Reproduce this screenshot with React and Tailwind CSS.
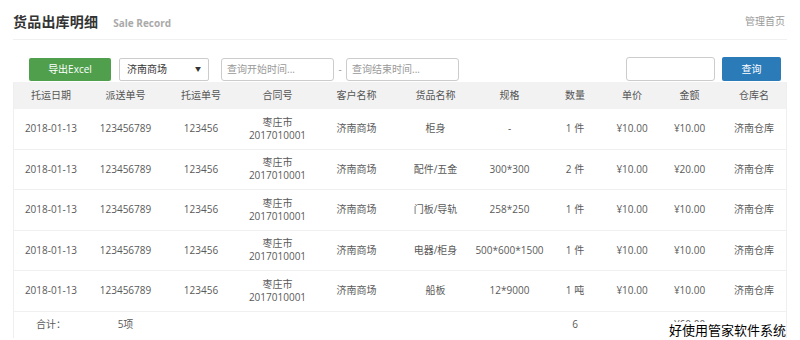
import React from 'react';

const cols = 'grid grid-cols-[74px_75px_76px_77px_81px_77px_71px_60px_54px_61px_68px]';

const headers = ['托运日期', '派送单号', '托运单号', '合同号', '客户名称', '货品名称', '规格', '数量', '单价', '金额', '仓库名'];

const rows = [
  { goods: '柜身', spec: '-', qty: '1 件', amount: '¥10.00' },
  { goods: '配件/五金', spec: '300*300', qty: '2 件', amount: '¥20.00' },
  { goods: '门板/导轨', spec: '258*250', qty: '1 件', amount: '¥10.00' },
  { goods: '电器/柜身', spec: '500*600*1500', qty: '1 件', amount: '¥10.00' },
  { goods: '船板', spec: '12*9000', qty: '1 吨', amount: '¥10.00' },
];

const Cell = ({ children }) => (
  <div className="flex items-center justify-center whitespace-nowrap">{children}</div>
);

const App = () => {
  return (
    <div className="w-[800px] h-[340px] overflow-hidden bg-white relative font-['Open_Sans','Noto_Sans_CJK_SC',sans-serif] text-[10px] text-[#5a5a5a]">
      {/* Title bar */}
      <div className="mx-[13px] h-[40px] flex items-center justify-between border-b border-[#f0f0f0] pt-[4px]">
        <div className="flex items-baseline">
          <h1 className="text-[14px] font-bold text-[#333] tracking-[0.2px]">货品出库明细</h1>
          <span className="ml-[15px] text-[10px] font-bold text-[#aaa]">Sale Record</span>
        </div>
        <span className="text-[10px] text-[#999] mr-[2px]">管理首页</span>
      </div>

      {/* Toolbar */}
      <div className="flex items-center h-[24px] mt-[17px] ml-[29px] mr-[19px]">
        <button className="w-[82px] h-[23px] bg-[#4f9f4c] text-white rounded-[2px] text-[10px]">导出Excel</button>
        <div className="ml-[8px] w-[90px] h-[23px] border border-[#ccc] rounded-[2px] flex items-center justify-between px-[7px] text-[#333]">
          <span>济南商场</span>
          <span className="text-[6px]">▼</span>
        </div>
        <div className="ml-[12px] w-[113px] h-[23px] border border-[#ccc] rounded-[3px] flex items-center px-[5px] text-[#999]">查询开始时间...</div>
        <span className="w-[12px] text-center text-[#999]">-</span>
        <div className="w-[113px] h-[23px] border border-[#ccc] rounded-[3px] flex items-center px-[5px] text-[#999]">查询结束时间...</div>
        <div className="flex-1" />
        <div className="w-[89px] h-[24px] border border-[#ccc] rounded-[3px]" />
        <button className="ml-[7px] w-[59px] h-[24px] bg-[#2b7bb9] text-white rounded-[2px] text-[10px]">查询</button>
      </div>

      {/* Table */}
      <div className="mx-[13px] mt-[1px] border-x border-[#efefef]">
        <div className={`${cols} h-[27px] bg-[#f2f2f2] text-[#555]`}>
          {headers.map((h) => (
            <Cell key={h}>{h}</Cell>
          ))}
        </div>
        {rows.map((r, i) => (
          <div key={i} className={`${cols} h-[40.5px] border-b border-[#f0f0f0]`}>
            <Cell>2018-01-13</Cell>
            <Cell>123456789</Cell>
            <Cell>123456</Cell>
            <div className="flex flex-col items-center justify-center leading-[13px] whitespace-nowrap">
              <span>枣庄市</span>
              <span>2017010001</span>
            </div>
            <Cell>济南商场</Cell>
            <Cell>{r.goods}</Cell>
            <Cell>{r.spec}</Cell>
            <Cell>{r.qty}</Cell>
            <Cell>¥10.00</Cell>
            <Cell>{r.amount}</Cell>
            <Cell>济南仓库</Cell>
          </div>
        ))}
        <div className={`${cols} h-[26px]`}>
          <Cell>合计：</Cell>
          <Cell>5项</Cell>
          <Cell />
          <Cell />
          <Cell />
          <Cell />
          <Cell />
          <Cell>6</Cell>
          <Cell />
          <Cell>¥60.00</Cell>
          <Cell />
        </div>
      </div>

      {/* Watermark */}
      <div className="absolute right-[14px] bottom-[2px] bg-white pl-[2px] text-[13px] leading-[16px] text-black font-['Noto_Sans_CJK_SC',sans-serif]">
        好使用管家软件系统
      </div>
    </div>
  );
};

export default App;
